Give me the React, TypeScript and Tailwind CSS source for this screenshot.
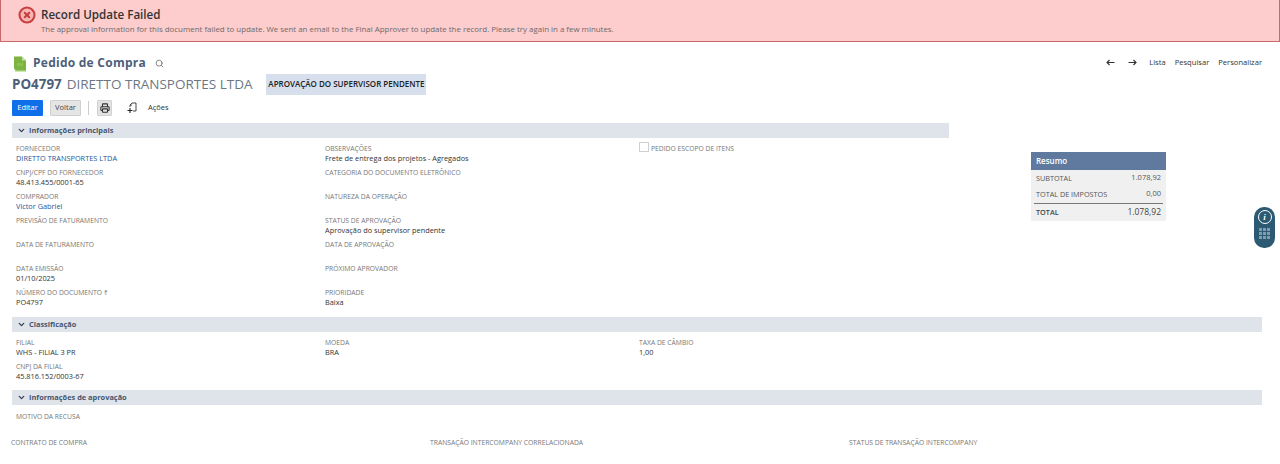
import { ChevronDown, Printer, Search, XCircle } from "lucide-react";

type FieldProps = { label: string; value?: string; link?: boolean };

function Field({ label, value, link }: FieldProps) {
  return (
    <div className="h-[24px] pl-1">
      <div className="text-[6.75px] leading-[10px] text-[#777777] whitespace-nowrap">{label}</div>
      {value && (
        <div className={`-mt-px text-[7.35px] leading-[10px] whitespace-nowrap ${link ? "text-[#255599]" : "text-[#333333]"}`}>
          {value}
        </div>
      )}
    </div>
  );
}

function SectionHeader({ title }: { title: string }) {
  return (
    <div className="h-[15px] bg-[#dfe4eb] flex items-center pl-[5px] gap-[3px]">
      <ChevronDown size={9} strokeWidth={3.5} className="text-[#333f50]" />
      <span className="text-[7.4px] font-bold text-[#46566e]">{title}</span>
    </div>
  );
}

export default function App() {
  return (
    <div className="relative h-[464px] w-[1280px] overflow-hidden bg-white font-['Open_Sans',sans-serif]">
      {/* Error banner */}
      <div className="h-[42px] bg-[#fdcccc] border border-t-0 border-[#c96a6a] flex pl-[17px] pt-[6px] gap-[5px]">
        <XCircle size={18} strokeWidth={2.8} className="text-[#c8403f] fill-[#f6b6b6]" />
        <div>
          <div className="text-[11.6px] leading-[15px] mt-[1px] font-semibold text-[#333333]">Record Update Failed</div>
          <div className="text-[7.9px] leading-[12px] mt-[1px] text-[#6b6b6b] whitespace-nowrap">
            The approval information for this document failed to update. We sent an email to the Final Approver to update the record. Please try again in a few minutes.
          </div>
        </div>
      </div>

      <div className="pl-[12px] pr-[18px]">
        {/* Page title */}
        <div className="flex items-center justify-between h-[20px] mt-[11px]">
          <div className="flex items-center">
            <svg width="14" height="17" viewBox="0 0 14 17" className="ml-[1px]">
              <path d="M1 1.5 H9 L13 5.5 V15 H3 Q1 15 1 13 Z" fill="#7cb342" />
              <path d="M2 15 H13 V16.5 H3 Q2 16.5 2 15 Z" fill="#9ccc65" />
              <path d="M9 1.5 L13 5.5 H9 Z" fill="#c5e1a5" />
              <path d="M4 8 H10 V11 H4 Z" fill="#8bc34a" />
            </svg>
            <span className="text-[12px] font-bold text-[#4d5f79] ml-[6px] tracking-[0.25px]">Pedido de Compra</span>
            <Search size={9} strokeWidth={2} className="text-[#666666] ml-[9px]" />
          </div>
          <div className="flex items-center text-[7.6px] text-[#333333]">
            <svg width="9" height="7" viewBox="0 0 9 7" className="mr-[13px]">
              <path d="M8.5 3.5 H1.5 M3.5 1 L1 3.5 L3.5 6" fill="none" stroke="#333" strokeWidth="1.1" />
            </svg>
            <svg width="9" height="7" viewBox="0 0 9 7" className="mr-[12px]">
              <path d="M0.5 3.5 H7.5 M5.5 1 L8 3.5 L5.5 6" fill="none" stroke="#333" strokeWidth="1.1" />
            </svg>
            <span className="mr-[9px]">Lista</span>
            <span className="mr-[9px]">Pesquisar</span>
            <span>Personalizar</span>
          </div>
        </div>

        {/* Record title */}
        <div className="flex items-center h-[22px]">
          <span className="text-[13.4px] font-bold text-[#4d5f79]">PO4797</span>
          <span className="text-[13.5px] text-[#6d7784] ml-[5px]">DIRETTO TRANSPORTES LTDA</span>
          <span className="ml-[14px] h-[21px] w-[160px] bg-[#d6dfeb] flex items-center justify-center text-[8px] font-semibold text-[#222222] whitespace-nowrap">
            APROVAÇÃO DO SUPERVISOR PENDENTE
          </span>
        </div>

        {/* Toolbar */}
        <div className="flex items-center h-[16px] mt-[5px]">
          <button className="w-[31px] h-[16px] bg-[#0f6fe8] rounded-[1px] text-white text-[7.5px] font-medium">Editar</button>
          <button className="w-[31px] h-[16px] ml-[7px] bg-[#e5e5e5] border border-[#d0d0d0] rounded-[1px] text-[#444444] text-[7.5px] font-medium">Voltar</button>
          <div className="w-px h-[14px] bg-[#cccccc] ml-[7px]" />
          <button className="w-[15px] h-[16px] ml-[8px] bg-[#e3e3e3] border border-[#d2d2d2] rounded-[1px] flex items-center justify-center">
            <Printer size={10} strokeWidth={2.6} className="text-[#333333]" />
          </button>
          <svg width="10" height="12" viewBox="0 0 10 12" className="ml-[15px]">
            <path d="M3 3 L5 1 H9 V9 H6 M3 3 V5 M3 3 H5" fill="none" stroke="#333" strokeWidth="0.9" />
            <path d="M3 6 V11 M0.5 8.5 H5.5" fill="none" stroke="#222" strokeWidth="1.1" />
          </svg>
          <span className="ml-[11px] text-[7.5px] text-[#333333]">Ações</span>
        </div>

        {/* Main info + summary */}
        <div className="flex mt-[7px] h-[194px]">
          <div className="w-[937px] shrink-0">
            <SectionHeader title="Informações principais" />
            <div className="grid grid-cols-[309px_314px_1fr] pt-[6px]">
              <div>
                <Field label="FORNECEDOR" value="DIRETTO TRANSPORTES LTDA" link />
                <Field label="CNPJ/CPF DO FORNECEDOR" value="48.413.455/0001-65" />
                <Field label="COMPRADOR" value="Victor Gabriel" link />
                <Field label="PREVISÃO DE FATURAMENTO" />
                <Field label="DATA DE FATURAMENTO" />
                <Field label="DATA EMISSÃO" value="01/10/2025" />
                <Field label="NÚMERO DO DOCUMENTO ₹" value="PO4797" />
              </div>
              <div>
                <Field label="OBSERVAÇÕES" value="Frete de entrega dos projetos - Agregados" />
                <Field label="CATEGORIA DO DOCUMENTO ELETRÔNICO" />
                <Field label="NATUREZA DA OPERAÇÃO" />
                <Field label="STATUS DE APROVAÇÃO" value="Aprovação do supervisor pendente" />
                <Field label="DATA DE APROVAÇÃO" />
                <Field label="PRÓXIMO APROVADOR" />
                <Field label="PRIORIDADE" value="Baixa" />
              </div>
              <div className="flex items-start gap-[2px] pl-1">
                <span className="w-[10px] h-[10px] border border-[#cfcfcf] bg-white -mt-[2px]" />
                <span className="text-[6.75px] leading-[10px] text-[#777777]">PEDIDO ESCOPO DE ITENS</span>
              </div>
            </div>
          </div>

          <div className="w-[135px] ml-[82px] mt-[29px] self-start bg-[#f0f0f0]">
            <div className="h-[18px] bg-[#5f7a9e] text-white text-[8px] font-semibold flex items-center pl-[5px]">Resumo</div>
            <div className="flex justify-between items-center px-[5px] h-[16px] text-[#555555]">
              <span className="text-[7.25px]">SUBTOTAL</span>
              <span className="text-[7.5px] font-medium">1.078,92</span>
            </div>
            <div className="flex justify-between items-center px-[5px] h-[16px] text-[#555555]">
              <span className="text-[7.25px]">TOTAL DE IMPOSTOS</span>
              <span className="text-[7.5px] font-medium">0,00</span>
            </div>
            <div className="mx-[3px] mt-[1px] border-t border-[#777777]" />
            <div className="flex justify-between items-center px-[5px] h-[17px] text-[#444444]">
              <span className="text-[7.25px] font-semibold">TOTAL</span>
              <span className="text-[8.5px]">1.078,92</span>
            </div>
          </div>
        </div>

        {/* Classification */}
        <SectionHeader title="Classificação" />
        <div className="grid grid-cols-[309px_314px_1fr] pt-[6px] h-[58px]">
          <div>
            <Field label="FILIAL" value="WHS - FILIAL 3 PR" />
            <Field label="CNPJ DA FILIAL" value="45.816.152/0003-67" />
          </div>
          <Field label="MOEDA" value="BRA" />
          <Field label="TAXA DE CÂMBIO" value="1,00" />
        </div>

        {/* Approval */}
        <SectionHeader title="Informações de aprovação" />
        <div className="pt-[7px] h-[33px]">
          <Field label="MOTIVO DA RECUSA" />
        </div>
        <div className="grid grid-cols-3 w-[1257px] -ml-[1px] text-[6.75px] leading-[10px] text-[#777777]">
          <span>CONTRATO DE COMPRA</span>
          <span>TRANSAÇÃO INTERCOMPANY CORRELACIONADA</span>
          <span>STATUS DE TRANSAÇÃO INTERCOMPANY</span>
        </div>
      </div>

      {/* Floating widget */}
      <div className="absolute left-[1254px] top-[207px] w-[21px] h-[41px] rounded-[10px] bg-[#2c5a72] flex flex-col items-center pt-[3px]">
        <div className="w-[14px] h-[14px] rounded-full border border-white flex items-center justify-center text-white text-[9px] italic font-bold leading-none font-['Liberation_Serif',serif]">i</div>
        <div className="grid grid-cols-3 gap-[1px] mt-[4px]">
          {Array.from({ length: 9 }).map((_, i) => (
            <span key={i} className="w-[3px] h-[3px] bg-[#7f9dae]" />
          ))}
        </div>
      </div>
    </div>
  );
}
